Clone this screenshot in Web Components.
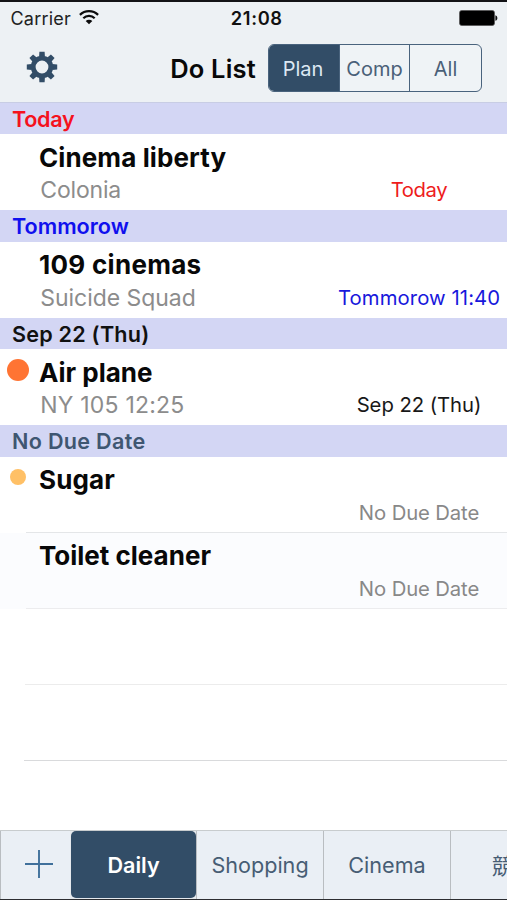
<!DOCTYPE html>
<html lang="en">
<head>
<meta charset="utf-8">
<title>Do List</title>
<style>
html,body{margin:0;padding:0}
body{width:507px;height:900px;overflow:hidden;background:#fff;font-family:Inter,"Liberation Sans","Noto Sans CJK JP",sans-serif}
</style>
</head>
<body>
<do-app></do-app>
<script>
const define = (name, html, after) => customElements.define(name, class extends HTMLElement {
  constructor() {
    super();
    this.attachShadow({mode: 'open'}).innerHTML = html;
  }
  connectedCallback() { if (after) after(this, this.shadowRoot); }
});

define('status-bar', `
<style>
:host{display:grid;grid-template-columns:1fr auto 1fr;align-items:center;height:32px;padding:0 9px 0 10.5px;box-sizing:border-box;color:#111;white-space:nowrap}
.left{display:flex;align-items:center;gap:8px;font-size:18px;letter-spacing:.2px;color:#222}
.time{font-size:18.3px;font-weight:600;letter-spacing:.65px;line-height:32px;padding-left:5px}
.right{display:flex;justify-content:flex-end}
svg{display:block}
.left svg{margin-top:-2px}
</style>
<div class="left"><span>Carrier</span>
<svg width="20" height="16" viewBox="0 0 20 16" fill="none" stroke="#0c0c0c" stroke-width="2.2"><path d="M.9 5.9a12.9 12.9 0 0 1 18.2 0M4.3 9.2a8 8 0 0 1 11.4 0"/><path d="M10 15.3 6.7 12a4.7 4.7 0 0 1 6.6 0z" fill="#0c0c0c" stroke="none"/></svg></div>
<div class="time">21:08</div>
<div class="right"><svg width="39" height="16" viewBox="0 0 39 16"><rect x=".5" y=".5" width="35" height="15" rx="2.2" fill="#000" stroke="#555" stroke-width=".8"/><path d="M36.4 5.2c2.6.7 2.6 4.9 0 5.6z" fill="#111"/></svg></div>`);

define('gear-icon', `
<style>:host{display:block;width:32px;height:32px;margin-bottom:3px}svg{display:block}</style>
<svg width="32" height="32" viewBox="-16 -16 32 32"><g fill="#324d67"></g><circle r="8.8" fill="none" stroke="#324d67" stroke-width="4.8"/></svg>`,
(el, root) => {
  const g = root.querySelector('g');
  for (let i = 0; i < 8; i++) {
    const p = document.createElementNS('http://www.w3.org/2000/svg', 'path');
    p.setAttribute('d', 'M-2.9-10.4-2.6-15.2H2.6L2.9-10.4z');
    p.setAttribute('transform', 'rotate(' + i * 45 + ')');
    g.appendChild(p);
  }
});

define('segment-item', `
<style>
:host{display:flex;align-items:center;justify-content:center;font-size:20px;color:#4a6078;border-left:1.5px solid #49637d;box-sizing:border-box;padding-top:1px}
:host(:first-child){border-left:0;padding-right:2px}
:host([active]){background:#324d67;color:#dce8f3}
</style><slot></slot>`);

define('segment-control', `
<style>
:host{display:grid;grid-template-columns:70px 70px 1fr;width:214px;height:48px;box-sizing:border-box;border:1.5px solid #49637d;border-radius:6px;overflow:hidden;background:#eff3f6}
</style><slot></slot>`);

define('nav-bar', `
<style>
:host{display:flex;align-items:center;height:68px;box-sizing:border-box;padding:0 25px 0 26px}
h1{margin:0 0 0 auto;padding-right:12px;font-size:25.5px;font-weight:600;letter-spacing:.2px;line-height:69px;white-space:nowrap;color:#080808}
</style>
<gear-icon></gear-icon><h1><slot></slot></h1><slot name="control"></slot>`);

define('section-header', `
<style>
:host{display:flex;align-items:center;height:32px;box-sizing:border-box;padding:1px 0 0 12px;background:#d3d6f4;font-size:21.6px;font-weight:600;line-height:1;white-space:nowrap;color:var(--tone,#111)}
:host([short]){height:31px;padding-top:2px}
</style><slot></slot>`);

define('todo-row', `
<style>
:host{display:block;height:76px;box-sizing:border-box;color:#080808}
.row{display:grid;grid-template-columns:39px 299px 162px;grid-template-rows:30px 24px;row-gap:6px;padding-top:8px;height:100%;box-sizing:border-box;white-space:nowrap}
.dot{display:flex;justify-content:center;align-items:center;width:36.5px}
.dot::before{content:"";width:var(--dot,0);height:var(--dot,0);border-radius:50%;background:var(--dot-color);transform:translateY(var(--dot-shift,-3px))}
.title{grid-column:2/4;font-size:26px;font-weight:670;line-height:30px;padding-top:var(--drop,0);height:30px;box-sizing:border-box}
.note{grid-column:2;padding-left:1.3px;font-size:23px;line-height:24px;color:#8c8c8c}
.due{grid-column:3;font-size:20.3px;line-height:24px;text-align:center;color:var(--tone,#888)}
</style>
<div class="row"><span class="dot"></span><span class="title"><slot></slot></span><span class="note"><slot name="note"></slot></span><span class="due"><slot name="due"></slot></span></div>`);

define('row-line', `
<style>:host{display:block;height:1px;margin:-1px 0 0 26px;background:#e4e6e8;position:relative}</style>`);

define('tab-item', `
<style>
:host{display:flex;align-items:center;justify-content:center;box-sizing:border-box;font-size:21.6px;color:#475d74;border-left:1.5px solid #b9bdc1;padding-bottom:1px;white-space:nowrap;overflow:hidden;background:#eaeff5}
:host([active]){border:0;background:#324d67;color:#fff;font-weight:600;border-radius:5px;margin:0 0 1px 1px;padding-bottom:0}
:host([cut]){justify-content:flex-start;padding-left:41px;font-family:"Noto Sans CJK JP",sans-serif}
</style><slot></slot>`);

define('tab-bar', `
<style>
:host{display:grid;grid-template-columns:70px 126px 127px 127px 57px;height:70px;box-sizing:border-box;border-top:1px solid #c8ccce;border-bottom:1px solid #2c2d31;background:#e5e9ed}
</style><slot></slot>`);

define('do-app', `
<style>
:host{display:flex;flex-direction:column;width:507px;height:900px;box-sizing:border-box;border-top:2px solid #131316;background:#fff}
header{height:101px;box-sizing:border-box;background:#edf1f4;border-bottom:1px solid #c8cde4}
main{flex:1}
svg{display:block}
</style>
<header>
<status-bar></status-bar>
<nav-bar>Do List<segment-control slot="control"><segment-item active>Plan</segment-item><segment-item>Comp</segment-item><segment-item>All</segment-item></segment-control></nav-bar>
</header>
<main>
<section-header short style="--tone:#f5121d;letter-spacing:-.3px">Today</section-header>
<todo-row style="--tone:#ee1c1c;--drop:1px"><span style="letter-spacing:.1px">Cinema liberty</span><span slot="note" style="letter-spacing:-.19px">Colonia</span><span slot="due" style="letter-spacing:-.37px">Today</span></todo-row>
<section-header style="--tone:#1010ee">Tommorow</section-header>
<todo-row style="--tone:#1818dc"><span style="letter-spacing:.3px">109 cinemas</span><span slot="note" style="letter-spacing:-.05px">Suicide Squad</span><span slot="due" style="letter-spacing:.08px">Tommorow 11:40</span></todo-row>
<section-header short style="letter-spacing:.22px">Sep 22 (Thu)</section-header>
<todo-row style="--tone:#181818;--dot:22px;--dot-color:#ff7433;--dot-shift:-2px;--drop:1px"><span style="letter-spacing:0">Air plane</span><span slot="note" style="letter-spacing:.2px">NY 105 12:25</span><span slot="due" style="letter-spacing:-.05px">Sep 22 (Thu)</span></todo-row>
<section-header style="--tone:#3f5671;letter-spacing:.3px">No Due Date</section-header>
<todo-row style="--dot:16px;--dot-color:#ffc066"><span style="letter-spacing:.15px">Sugar</span><span slot="due" style="letter-spacing:-.12px">No Due Date</span></todo-row>
<row-line></row-line>
<todo-row style="background:#fbfcfe"><span style="letter-spacing:0">Toilet cleaner</span><span slot="due" style="letter-spacing:-.12px">No Due Date</span></todo-row>
<row-line style="background:#ececee"></row-line>
<todo-row></todo-row>
<row-line style="margin-left:25px;background:#ececec"></row-line>
<todo-row></todo-row>
<row-line style="margin-left:24px;background:#d9dadc"></row-line>
</main>
<tab-bar>
<tab-item style="padding-left:7px;padding-bottom:2px"><svg width="28" height="28" viewBox="0 0 28 28" fill="none" stroke="#40709b" stroke-width="1.9"><path d="M0 14H28M14 0V28"/></svg></tab-item>
<tab-item active>Daily</tab-item><tab-item>Shopping</tab-item><tab-item>Cinema</tab-item><tab-item cut>競</tab-item>
</tab-bar>`);
</script>
</body>
</html>
